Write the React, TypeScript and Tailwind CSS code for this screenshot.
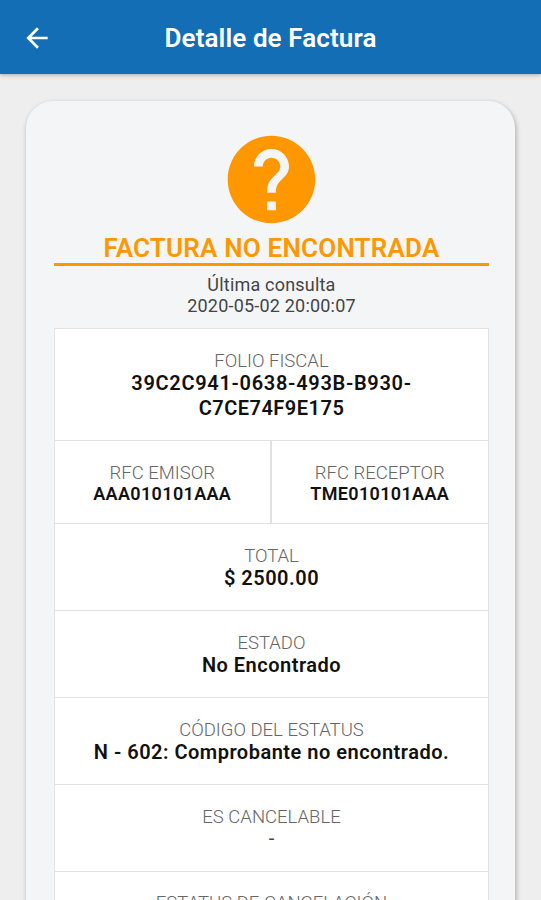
import React from 'react';
import { MdArrowBack, MdHelp } from 'react-icons/md';

const rows = [
  { label: 'TOTAL', value: '$ 2500.00' },
  { label: 'ESTADO', value: 'No Encontrado' },
  { label: 'CÓDIGO DEL ESTATUS', value: 'N - 602: Comprobante no encontrado.' },
];

const Label = ({ children }: { children: React.ReactNode }) => (
  <div className="-mb-px text-[18.5px] leading-[22px] font-light text-[#666666]">{children}</div>
);

export default function App() {
  return (
    <div className="h-[900px] w-full overflow-hidden bg-[#eeeeee] font-['Roboto',sans-serif] text-[#111111]">
      <header className="relative flex h-[74px] items-center justify-center bg-[#136eb5] shadow-[0_1px_4px_rgba(0,0,0,0.3)]">
        <MdArrowBack className="absolute top-[22px] left-[21px] size-8 text-white" />
        <h1 className="pt-px text-[26px] leading-8 font-semibold tracking-[0.1px] text-white">Detalle de Factura</h1>
      </header>

      <main className="mx-auto mt-[27px] h-[900px] w-[489px] rounded-[27px] bg-[#f3f5f7] pr-[26px] pl-[28px] pt-[26px] shadow-[1px_2px_5px_rgba(0,0,0,0.3)]">
        <div className="flex flex-col items-center text-center">
          <MdHelp className="size-[105px] text-[#ff9800]" />
          <h2 className="w-full border-b-[3px] border-[#ff9800] pt-px text-[26px] leading-[30px] font-semibold tracking-[0.2px] text-[#ff9800]">
            FACTURA NO ENCONTRADA
          </h2>
          <div className="mt-2 text-[18px] leading-[21px] tracking-[0.2px] text-[#444444]">
            <div>Última consulta</div>
            <div>2020-05-02 20:00:07</div>
          </div>
        </div>

        <div className="mt-3 border border-[#e0e2e3] bg-white text-center">
          <div className="h-[112px] border-b border-[#e0e2e3] pt-[21px]">
            <Label>FOLIO FISCAL</Label>
            <div className="text-[20px] leading-[25px] font-semibold tracking-[0.5px]">
              <span className="tracking-[0.7px]">39C2C941-0638-493B-B930-</span>
              <br />
              C7CE74F9E175
            </div>
          </div>
          <div className="grid h-[83px] grid-cols-2 border-b border-[#e0e2e3]">
            <div className="border-r-2 border-[#e0e2e3] pt-[21px]">
              <Label>RFC EMISOR</Label>
              <div className="text-[18px] leading-[22px] font-semibold tracking-[0.35px]">AAA010101AAA</div>
            </div>
            <div className="pt-[21px]">
              <Label>RFC RECEPTOR</Label>
              <div className="text-[18px] leading-[22px] font-semibold tracking-[0.35px]">TME010101AAA</div>
            </div>
          </div>
          {rows.map(row => (
            <div key={row.label} className="h-[87px] border-b border-[#e0e2e3] pt-[21px]">
              <Label>{row.label}</Label>
              <div className="text-[20px] leading-[24px] font-semibold tracking-[0.5px]">{row.value}</div>
            </div>
          ))}
          <div className="h-[87px] border-b border-[#e0e2e3] pt-[21px]">
            <Label>ES CANCELABLE</Label>
            <div className="text-[20px] leading-[22px] text-[#444444]">-</div>
          </div>
          <div className="h-[87px] pt-5">
            <Label>ESTATUS DE CANCELACIÓN</Label>
          </div>
        </div>
      </main>
    </div>
  );
}
